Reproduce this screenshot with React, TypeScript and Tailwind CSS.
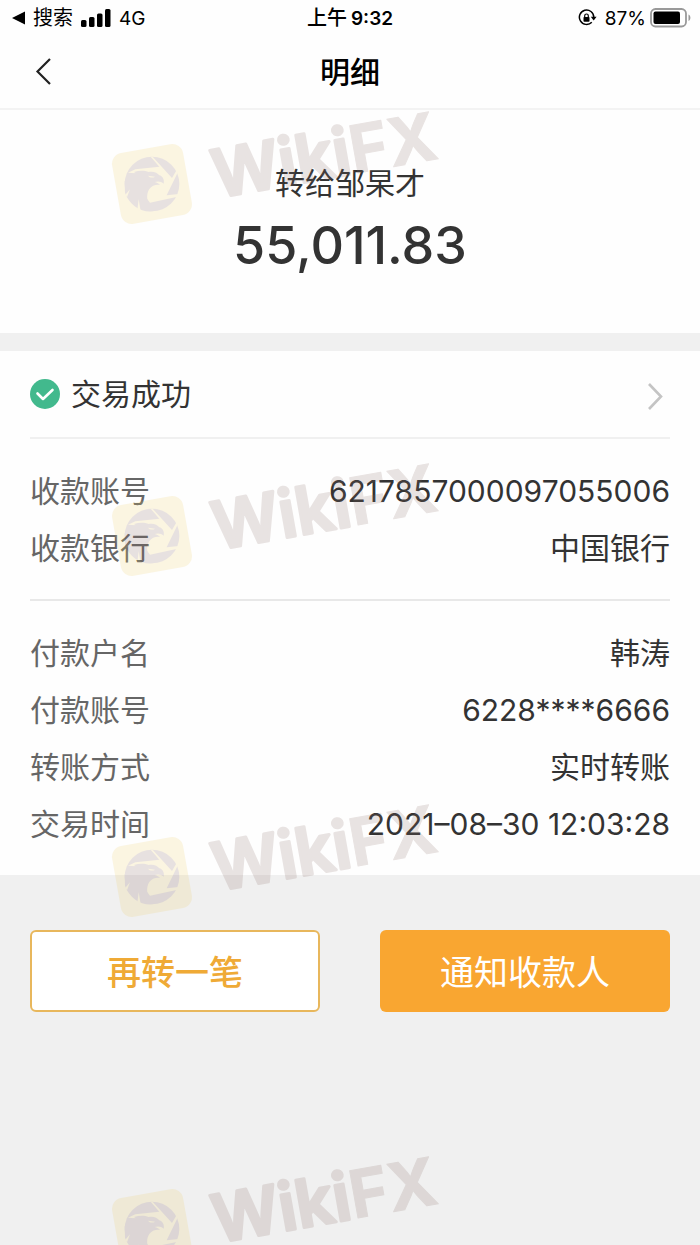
import React from "react";

const payee = [
  { label: "收款账号", value: "6217857000097055006" },
  { label: "收款银行", value: "中国银行" },
];

const payer = [
  { label: "付款户名", value: "韩涛" },
  { label: "付款账号", value: "6228****6666" },
  { label: "转账方式", value: "实时转账" },
  { label: "交易时间", value: "2021–08–30 12:03:28" },
];

function Watermark({ className }: { className: string }) {
  return (
    <svg
      className={`absolute left-[100px] opacity-[0.18] ${className}`}
      width="380"
      height="170"
      viewBox="0 -30 380 170"
      aria-hidden="true"
    >
      <g transform="rotate(-10 52 74)">
        <rect x="16" y="38" width="72" height="72" rx="11" fill="#eecd63" />
        <text
          x="113"
          y="99"
          fontSize="66"
          fontWeight="600"
          fill="#8a6d66"
          stroke="#8a6d66"
          strokeWidth="3"
          strokeLinejoin="round"
          className="font-['Inter',sans-serif]"
        >
          Wiki
          <tspan fontWeight="700" strokeWidth="1">
            FX
          </tspan>
        </text>
      </g>
      {/* eagle inside the shutter */}
      <g transform="translate(10 32) scale(0.3333)">
        <circle cx="126" cy="126" r="82" fill="#85625f" />
        {/* opening between the shutter blades */}
        <path
          d="M54 92 L76 82 L148 74 L122 44 L128 44 L186 108 L200 84 L204 90 L170 160 L206 156 L203 164 L120 182 L96 150 L110 96 Z"
          fill="#eecd63"
        />
        <path
          d="M44 118 C54 102 64 96 78 94 L72 90 C88 85 104 85 116 90 C130 87 142 92 148 100 C157 102 164 112 161 125 C154 118 144 117 134 120 C141 122 147 124 150 129 C137 127 125 132 118 141 C108 156 108 182 128 208 C94 212 58 190 45 152 Z"
          fill="#85625f"
        />
        <g fill="#eecd63">
          <path d="M114 101 L135 104 C128 109 119 107 114 101 Z" />
          <path d="M82 205 L86 172 L92 208 Z" />
          <path d="M46 158 L60 142 L51 166 Z" />
        </g>
      </g>
    </svg>
  );
}

function StatusBar() {
  return (
    <div className="grid h-9 grid-cols-3 items-center px-3 text-[19px] leading-none text-black">
      <div className="flex items-center">
        <svg width="13" height="14" viewBox="0 0 13 14" aria-hidden="true">
          <path d="M0 7 L13 0.5 V13.5 Z" fill="black" />
        </svg>
        <span className="ml-2 text-[20px]">搜索</span>
        <svg className="ml-2" width="30" height="18" viewBox="0 0 30 18" aria-hidden="true">
          <rect x="0" y="11" width="5.5" height="7" rx="1.5" />
          <rect x="8" y="8" width="5.5" height="10" rx="1.5" />
          <rect x="16" y="4.5" width="5.5" height="13.5" rx="1.5" />
          <rect x="24" y="0" width="5.5" height="18" rx="1.5" />
        </svg>
        <span className="ml-2">4G</span>
      </div>
      <div className="flex items-center justify-center gap-1">
        <span className="text-[20px] font-medium">上午</span>
        <span className="font-semibold">9:32</span>
      </div>
      <div className="-mr-1 flex items-center justify-end">
        <svg width="19" height="18" viewBox="0 0 19 18" aria-hidden="true">
          <path
            d="M13.8 13.2 A7.2 7.2 0 1 1 15.8 8.2"
            fill="none"
            stroke="black"
            strokeWidth="1.5"
          />
          <path d="M12.8 7.7 H18.6 L15.7 11.6 Z" />
          <rect x="5.5" y="8" width="6" height="4.8" rx="0.8" />
          <path d="M6.7 8.5 V6.8 a1.8 1.8 0 0 1 3.6 0 V8.5" fill="none" stroke="black" strokeWidth="1.2" />
        </svg>
        <span className="ml-2">87%</span>
        <svg className="ml-1" width="42" height="20" viewBox="0 0 42 20" aria-hidden="true">
          <rect x="1" y="1" width="35" height="17.5" rx="4.5" fill="none" stroke="#999" strokeWidth="1.8" />
          <rect x="3.5" y="3.5" width="26.5" height="12.5" rx="2" />
          <path d="M38.5 6.5 C41 7.5 41 12 38.5 13 Z" fill="#999" />
        </svg>
      </div>
    </div>
  );
}

function Rows({ items }: { items: { label: string; value: string }[] }) {
  return (
    <dl>
      {items.map((item) => (
        <div key={item.label} className="flex h-[57px] items-center justify-between">
          <dt className="text-[#666]">{item.label}</dt>
          <dd className="text-[#333]">{item.value}</dd>
        </div>
      ))}
    </dl>
  );
}

export default function App() {
  return (
    <div className="relative min-h-screen overflow-hidden bg-[#f0f0f0] font-['Inter','Noto_Sans_CJK_SC',sans-serif] text-[30px] leading-none text-[#333]">
      <header className="border-b-2 border-[#f3f3f3] bg-[#fefefe]">
        <StatusBar />
        <div className="grid h-[72px] grid-cols-3 items-center px-8">
          <button type="button" aria-label="返回" className="justify-self-start">
            <svg width="22" height="28" viewBox="0 0 22 28" aria-hidden="true">
              <path d="M18 1 L5.5 13.5 L18 26" fill="none" stroke="#222" strokeWidth="2.2" />
            </svg>
          </button>
          <h1 className="text-center font-medium text-black">明细</h1>
        </div>
      </header>

      <main>
        <section className="flex h-[223px] flex-col items-center bg-[#fefefe] pt-[58px]">
          <p>转给邹杲才</p>
          <p className="mt-[22px] text-[52px] font-medium">55,011.83</p>
        </section>

        <section className="mt-[18px] bg-[#fefefe] px-[30px] pb-[23px]">
          <a href="#status" className="flex h-[88px] items-center border-b-2 border-[#f0f0f0]">
            <svg width="30" height="30" viewBox="0 0 30 30" aria-hidden="true">
              <circle cx="15" cy="15" r="15" fill="#42b98d" />
              <path
                d="M7.5 14.5 L13 20 L22.5 11"
                fill="none"
                stroke="white"
                strokeWidth="2.6"
                strokeLinecap="round"
                strokeLinejoin="round"
              />
            </svg>
            <span className="ml-[11px]">交易成功</span>
            <svg className="mr-1 ml-auto" width="20" height="32" viewBox="0 0 20 32" aria-hidden="true">
              <path d="M3 6 L15 18.5 L3 31" fill="none" stroke="#c4c4c4" strokeWidth="2.6" />
            </svg>
          </a>
          <div className="border-b-2 border-[#e8e8e8] py-[23px]">
            <Rows items={payee} />
          </div>
          <div className="pt-[23px]">
            <Rows items={payer} />
          </div>
        </section>

        <div className="grid grid-cols-2 gap-[60px] px-[30px] pt-[55px] text-[34px]">
          <button
            type="button"
            className="h-[82px] rounded-md border-2 border-[#e8b75c] bg-white pt-1 font-medium text-[#efaa36]"
          >
            再转一笔
          </button>
          <button type="button" className="h-[82px] rounded-md bg-[#f9a631] pt-1 text-white">
            通知收款人
          </button>
        </div>
      </main>

      <div className="pointer-events-none absolute inset-0 overflow-hidden">
        <Watermark className="top-[80px]" />
        <Watermark className="top-[432px]" />
        <Watermark className="top-[773px]" />
        <Watermark className="top-[1125px]" />
      </div>
    </div>
  );
}
